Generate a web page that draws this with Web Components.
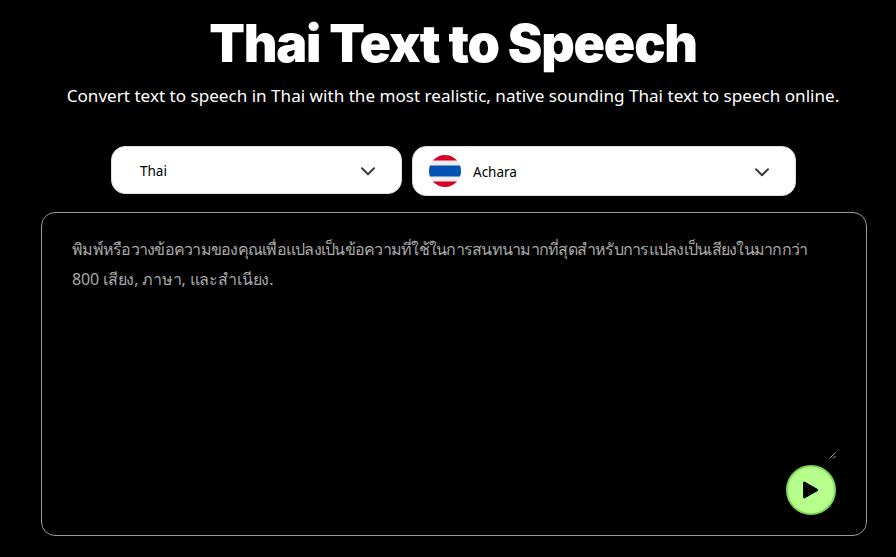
<!DOCTYPE html>
<html lang="th"><head><meta charset="utf-8"><title>Thai Text to Speech</title>
<style>
html,body{margin:0;padding:0;background:#000;height:557px;overflow:hidden}
body{font-family:"Noto Sans",sans-serif;color:#fff}
</style></head><body>
<tts-app></tts-app>
<script>
function def(name, html){
  customElements.define(name, class extends HTMLElement{
    constructor(){super();this.attachShadow({mode:'open'}).innerHTML=html;}
  });
}
const chev=`<svg width="14" height="9" viewBox="0 0 14 9" fill="none"><path d="M1 1.2 7 7.2l6-6" stroke="#3c3c3c" stroke-width="2" stroke-linecap="round" stroke-linejoin="round"/></svg>`;
def('tts-header',`<style>
:host{display:block;text-align:center;padding-left:10px}
h1{margin:0;font:900 52px/1 Inter,"Liberation Sans",sans-serif;letter-spacing:-1.25px;color:#fff;padding-top:18px;height:52px}
p{margin:0;padding-top:14px;font:400 17.1px/24px "Noto Sans",sans-serif;color:#fff;white-space:nowrap}
</style><h1><slot name="title"></slot></h1><p><slot name="sub"></slot></p>`);
def('tts-select',`<style>
:host{display:flex;align-items:center;box-sizing:border-box;background:#fff;border:1px solid #ddd;border-radius:14px;color:#000;font:13.5px/20px "Noto Sans",sans-serif;padding:2px 26px 0 var(--pl,28px);width:var(--w);height:var(--h)}
.l{flex:1;display:flex;align-items:center;gap:12px}
svg{display:block}
</style><div class="l"><slot name="icon"></slot><slot></slot></div>${chev}`);
def('tts-flag',`<style>:host{display:block;width:32px;height:32px;margin-top:-2px}</style>
<svg width="32" height="32" viewBox="0 0 32 32"><defs><clipPath id="c"><circle cx="16" cy="16" r="16"/></clipPath></defs><g clip-path="url(#c)"><rect width="32" height="32" fill="#eeeeee"/><rect width="32" height="5.5" fill="#d80027"/><rect y="26.5" width="32" height="5.5" fill="#d80027"/><rect y="10.5" width="32" height="11" fill="#0052b4"/></g></svg>`);
def('tts-play',`<style>
:host{position:absolute;right:30px;bottom:20px;width:50px;height:50px;box-sizing:border-box;border-radius:50%;background:#b6ff8c;border:2px solid #7ed957;display:flex;align-items:center;justify-content:center}
</style><svg width="16" height="18" viewBox="0 0 16 18"><path d="M.6 1.4v15.2c0 .4.4.6.8.4l13.2-7.5c.4-.2.4-.8 0-1L1.4 1c-.4-.2-.8 0-.8.4z" fill="#000" stroke="#000" stroke-width="1"/></svg>`);
def('tts-editor',`<style>
:host{display:block;position:relative;box-sizing:border-box;width:826px;height:324px;margin-left:41px;border:1px solid #9b9b9b;border-radius:14px;background:#000}
.t{padding:21px 30px 0 30px;font:16px/30px "Noto Sans",sans-serif;color:#a8a8a8}
.g{position:absolute;right:30px;bottom:76px;display:block}
</style><div class="t"><slot></slot></div>
<svg class="g" width="7" height="7" viewBox="0 0 7 7"><path d="M0.5 6.5 6.5 0.5M4 6.5 6.5 4" stroke="#aaa" stroke-width="1" fill="none"/></svg>
<tts-play></tts-play>`);
def('tts-app',`<style>
:host{display:block;width:896px}
.row{display:flex;justify-content:flex-start;align-items:flex-start;gap:10px;padding:38px 0 16px 111px}
.a{letter-spacing:-.75px}
.b{letter-spacing:-.18px}
</style>
<tts-header><span slot="title">Thai Text to Speech</span><span slot="sub">Convert text to speech in Thai with the most realistic, native sounding Thai text to speech online.</span></tts-header>
<div class="row">
<tts-select style="--w:291px;--h:48px;--pl:28px">Thai</tts-select>
<tts-select style="--w:384px;--h:50px;--pl:16px"><tts-flag slot="icon"></tts-flag>Achara</tts-select>
</div>
<tts-editor><span class="a">พิมพ์หรือวางข้อความของคุณเพื่อแปลงเป็นข้อความที่ใช้ในการสนทนามากที่สุดสำหรับการแปลงเป็นเสียงในมากกว่า</span> <span class="b">800 เสียง, ภาษา, และสำเนียง.</span></tts-editor>`);
</script>
</body></html>
